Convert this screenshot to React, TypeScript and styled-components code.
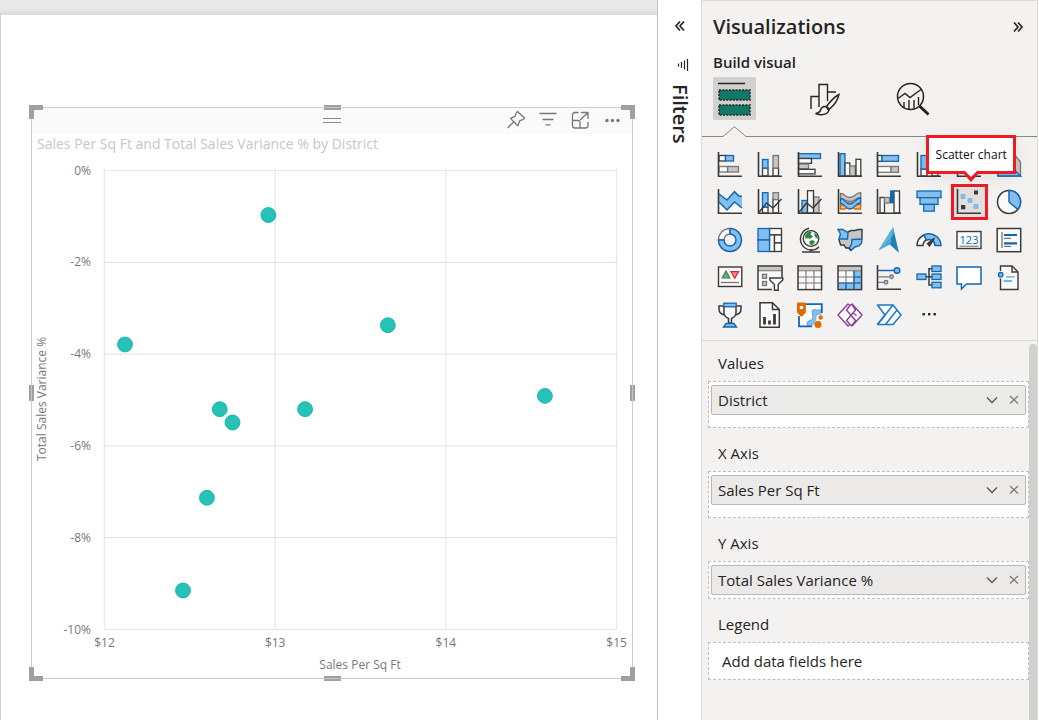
import React from 'react';
import styled, { createGlobalStyle } from 'styled-components';

const c = {
  dark: '#3b3a39',
  ink: '#252423',
  blue: '#83beec',
  blueLine: '#1267b4',
  gray: '#c8c6c4',
  grayLine: '#797775',
  paper: '#fafafa',
  purple: '#8c3a9e',
  orange: '#e06c00',
  red: '#ed1c24',
};

const GlobalStyle = createGlobalStyle`
  *, *::before, *::after { box-sizing: border-box; }
  body {
    margin: 0;
    background: #ffffff;
    color: ${c.ink};
    font-family: "Open Sans", "Noto Sans", sans-serif;
  }
  button { font: inherit; color: inherit; padding: 0; border: 0; background: none; cursor: pointer; }
  h1, h2, h3 { margin: 0; }
  svg { display: block; }
`;

/* ---------- page ---------- */

const Page = styled.div`
  display: flex;
  min-height: 100vh;
`;

const ReportArea = styled.main`
  flex: 1;
  min-width: 0;
  display: flex;
  flex-direction: column;
`;

const TopStrip = styled.div`
  height: 15px;
  background: linear-gradient(#e9e9e9 60%, #d9d9d9);
`;

const Canvas = styled.div`
  flex: 1;
  padding: 92px 24px 0 30px;
  border-left: 1px solid #d2d2d2;
`;

/* ---------- chart tile ---------- */

const Tile = styled.section`
  position: relative;
  border: 1px solid #cccccc;
`;

const TileBar = styled.div`
  height: 26px;
  background: #fafafa;
  display: grid;
  grid-template-columns: 1fr auto 1fr;
`;

const Grip = styled.button`
  grid-column: 2;
  width: 18px;
  height: 24px;
`;

const TileActions = styled.div`
  justify-self: end;
  display: flex;
  gap: 12px;
  padding: 2px 10px 0 0;
`;

const TileAction = styled.button`
  width: 20px;
  height: 20px;
`;

const TileTitle = styled.h2`
  padding-left: 5px;
  font-size: 14px;
  line-height: 20px;
  font-weight: 400;
  color: #c8c6c4;
  white-space: nowrap;
`;

const Plot = styled.svg`
  width: 100%;
  height: auto;
  font-size: 12px;
  fill: #777777;
`;

type CornerProps = { $v: 'top' | 'bottom'; $h: 'left' | 'right' };
const Corner = styled.span<CornerProps>`
  position: absolute;
  ${(p) => p.$v}: -3px;
  ${(p) => p.$h}: -3px;
  width: 14px;
  height: 14px;
  border: 0 solid #a0a0a0;
  border-${(p) => p.$v}-width: 5px;
  border-${(p) => p.$h}-width: 5px;
`;

const EdgeH = styled.span<{ $v: 'top' | 'bottom' }>`
  position: absolute;
  ${(p) => p.$v}: -3px;
  left: calc(50% - 8px);
  width: 17px;
  height: 5px;
  background: linear-gradient(#a0a0a0 40%, #c4c4c4 40%, #c4c4c4 60%, #a0a0a0 60%);
`;

const EdgeV = styled.span<{ $h: 'left' | 'right' }>`
  position: absolute;
  ${(p) => p.$h}: -3px;
  top: calc(50% - 8px);
  width: 5px;
  height: 16px;
  background: linear-gradient(90deg, #a0a0a0 40%, #c4c4c4 40%, #c4c4c4 60%, #a0a0a0 60%);
`;

const POINTS: [number, number][] = [
  [12.96, -0.97],
  [13.66, -3.37],
  [12.12, -3.79],
  [12.675, -5.2],
  [12.75, -5.49],
  [13.175, -5.2],
  [14.58, -4.91],
  [12.6, -7.13],
  [12.46, -9.15],
];
const px = (v: number) => 72.5 + (v - 12) * 170.7;
const py = (p: number) => 16.5 - p * 45.9;

function ScatterPlot() {
  return (
    <Plot viewBox="0 0 600 524" role="img" aria-label="Sales Per Sq Ft against Total Sales Variance %">
      {[12, 13, 14, 15].map((v) => (
        <g key={v}>
          <path d={`M${px(v)} 14.5V475.5`} stroke="#ebebeb" strokeWidth="1.4" />
          <text x={px(v)} y="493" textAnchor="middle">{`$${v}`}</text>
        </g>
      ))}
      {[0, -2, -4, -6, -8, -10].map((p) => (
        <g key={p}>
          <path d={`M72 ${py(p)}H585`} stroke="#e6e6e6" strokeWidth="1.2" />
          <text x="59" y={py(p) + 4} textAnchor="end">{`${p}%`}</text>
        </g>
      ))}
      {POINTS.map(([x, y]) => (
        <circle key={`${x}${y}`} cx={px(x)} cy={py(y)} r="7.4" fill="#28c1b7" stroke="#12b9ad" />
      ))}
      <text x="328" y="515" textAnchor="middle">Sales Per Sq Ft</text>
      <text transform="translate(14 245) rotate(-90)" textAnchor="middle">Total Sales Variance %</text>
    </Plot>
  );
}

function ChartTile() {
  const line = { fill: 'none', stroke: '#777', strokeWidth: 1.3, strokeLinejoin: 'round', strokeLinecap: 'round' } as const;
  return (
    <Tile>
      <TileBar>
        <Grip aria-label="Move visual">
          <svg width="18" height="24"><path d="M0 10.5H18M0 14.5H18" stroke="#8a8a8a" /></svg>
        </Grip>
        <TileActions>
          <TileAction aria-label="Pin visual">
            <svg width="20" height="20" {...line}>
              <path d="M11.5 1.5 18.5 8 16.8 9.7 13.8 10.7 11.8 15.7 4.5 8.4 9 6.4 10.2 3.2ZM7.8 12 2 17.5" />
            </svg>
          </TileAction>
          <TileAction aria-label="Filters on visual">
            <svg width="20" height="20" {...line}>
              <path d="M2 3.5H18M5 9.5H15M8 14.8H12" />
            </svg>
          </TileAction>
          <TileAction aria-label="Focus mode">
            <svg width="20" height="20" {...line}>
              <path d="M8 2.5H5Q2.5 2.5 2.5 5V15.5Q2.5 18 5 18H15.5Q18 18 18 15.5V12.5M2.5 10.5H8Q10 10.5 10 12.5V18M11.5 2.5H18V8.5M18 2.5 10.5 9.5" />
            </svg>
          </TileAction>
          <TileAction aria-label="More options">
            <svg width="20" height="20" fill="#777">
              <circle cx="5" cy="10.5" r="1.7" /><circle cx="10.5" cy="10.5" r="1.7" /><circle cx="16" cy="10.5" r="1.7" />
            </svg>
          </TileAction>
        </TileActions>
      </TileBar>
      <TileTitle>Sales Per Sq Ft and Total Sales Variance % by District</TileTitle>
      <ScatterPlot />
      <Corner $v="top" $h="left" />
      <Corner $v="top" $h="right" />
      <Corner $v="bottom" $h="left" />
      <Corner $v="bottom" $h="right" />
      <EdgeH $v="top" />
      <EdgeH $v="bottom" />
      <EdgeV $h="left" />
      <EdgeV $h="right" />
    </Tile>
  );
}

/* ---------- filters rail ---------- */

const FiltersRail = styled.aside`
  width: 44px;
  flex: none;
  border-left: 1px solid #c2c2c2;
  display: flex;
  flex-direction: column;
  align-items: center;
  padding-top: 18px;
  background: #ffffff;
`;

const RailButton = styled.button`
  width: 16px;
  height: 16px;
`;

const RailIcon = styled.svg`
  margin: 23px 0 0 8px;
`;

const RailTitle = styled.h2`
  margin-top: 11px;
  writing-mode: vertical-rl;
  font-size: 20px;
  line-height: 24px;
  font-weight: 600;
`;

/* ---------- visualizations pane ---------- */

const Pane = styled.aside`
  width: 337px;
  flex: none;
  display: flex;
  flex-direction: column;
  background: #f3f2f1;
  border: 1px solid #dedcda;
  border-bottom: 0;
  margin-right: 1px;
`;

const PaneHead = styled.header`
  display: flex;
  justify-content: space-between;
  align-items: center;
  height: 51px;
  padding: 0 11px;
`;

const PaneTitle = styled.h1`
  font-size: 20px;
  line-height: 28px;
  font-weight: 600;
`;

const BuildTitle = styled.h2`
  padding-left: 11px;
  font-size: 15px;
  line-height: 20px;
  font-weight: 600;
`;

const Modes = styled.nav`
  display: flex;
  gap: 46px;
  padding: 5px 0 6px 11px;
`;

const Mode = styled.button<{ $on?: boolean }>`
  width: 43px;
  height: 43px;
  border-radius: 2px;
  display: grid;
  place-items: center;
  background: ${(p) => (p.$on ? '#d2d0ce' : 'transparent')};
`;

const Divider = styled.div`
  display: flex;
  height: 11px;
  &::before { content: ''; width: 21px; border-bottom: 1px solid #8a8886; }
  &::after { content: ''; flex: 1; border-bottom: 1px solid #8a8886; }
`;

const Gallery = styled.div`
  height: 204px;
  padding: 9px 8px 6px 8px;
  display: grid;
  grid-template-columns: repeat(8, 1fr);
  grid-template-rows: repeat(5, 1fr);
  border-bottom: 1px solid #dcdad8;
`;

const VisualButton = styled.button<{ $on?: boolean }>`
  position: relative;
  place-self: center;
  width: 37px;
  height: 36px;
  display: grid;
  place-items: center;
  border: ${(p) => (p.$on ? `3px solid ${c.red}` : '0')};
  background: ${(p) => (p.$on ? '#e1dfdd' : 'transparent')};
`;

const Tip = styled.span`
  position: absolute;
  z-index: 1;
  left: calc(50% + 2px);
  bottom: 43px;
  width: 90px;
  transform: translateX(-50%);
  border: 3px solid ${c.red};
  background: #ffffff;
  color: #111111;
  font-size: 12px;
  line-height: 33px;
  text-align: center;
  white-space: nowrap;
  box-shadow: 0 4px 16px rgba(0, 0, 0, 0.07);
  svg {
    position: absolute;
    top: 100%;
    left: 50%;
    transform: translateX(-50%);
  }
`;

const Wells = styled.div`
  flex: 1;
  display: flex;
`;

const WellList = styled.div`
  flex: 1;
  display: flex;
  flex-direction: column;
  gap: 3px;
  padding-left: 6px;
`;

const WellLabel = styled.h3`
  padding: 5px 0 0 10px;
  font-size: 15px;
  line-height: 35px;
  font-weight: 400;
`;

const WellBox = styled.div<{ $roomy?: boolean }>`
  padding: 3px 2px;
  padding-bottom: ${(p) => (p.$roomy ? 12 : 3)}px;
  border: 1px dashed #c0bebc;
  background: #ffffff;
`;

const Chip = styled.div`
  height: 30px;
  display: flex;
  align-items: center;
  gap: 8px;
  padding: 0 4px 0 6px;
  border: 1px solid #bab8b6;
  border-radius: 2px;
  background: #ebeae9;
  font-size: 15px;
`;

const ChipName = styled.span`
  flex: 1;
`;

const ChipButton = styled.button`
  width: 14px;
  height: 14px;
`;

const EmptyWell = styled.button`
  width: 100%;
  height: 30px;
  padding-left: 11px;
  text-align: left;
  font-size: 15px;
`;

const ScrollThumb = styled.div`
  width: 8px;
  margin-top: 3px;
  border-radius: 4px 4px 0 0;
  background: #d2d0ce;
`;

/* ---------- visual gallery glyphs ---------- */

type BoxProps = { x: number; y: number; w: number; h: number; t?: 'blue' | 'gray' | 'white' | 'mute' };
function Box({ x, y, w, h, t = 'white' }: BoxProps) {
  const fill = t === 'blue' ? c.blue : t === 'gray' ? c.gray : c.paper;
  const stroke = t === 'blue' ? c.blueLine : t === 'white' ? c.dark : c.grayLine;
  return <rect x={x} y={y} width={w} height={h} fill={fill} stroke={stroke} strokeWidth="1.3" />;
}
const Axis = () => <path d="M1.5 0V24.3H25" fill="none" stroke={c.dark} strokeWidth="1.6" />;
const Trend = () => <path d="M1.5 24 9.5 14 16 19 24.5 10" fill="none" stroke={c.dark} strokeWidth="1.4" />;
const Sheet = () => (
  <>
    <rect x="1" y="1" width="24" height="24" fill={c.paper} />
    <rect x="1" y="1" width="24" height="4.5" fill={c.gray} />
  </>
);
const SheetLines = () => (
  <>
    <path d="M1 5.7H25M1 12H25M1 18H25M9 5.7V25M17 5.7V25" stroke={c.grayLine} strokeWidth="1.1" />
    <rect x="1" y="1" width="23.6" height="23.6" fill="none" stroke={c.dark} strokeWidth="1.5" />
  </>
);

const VISUALS: { name: string; art: React.ReactNode }[] = [
  { name: 'Stacked bar chart', art: <><Box x={2} y={3.5} w={6.5} h={5.5} /><Box x={8.5} y={3.5} w={8} h={5.5} t="blue" /><Box x={10.5} y={14.5} w={11} h={5.5} t="gray" /><Box x={2} y={14.5} w={8.5} h={5.5} t="mute" /><Axis /></> },
  { name: 'Stacked column chart', art: <><Box x={5.5} y={16} w={5.5} h={8} /><Box x={5.5} y={7.5} w={5.5} h={8.5} t="blue" /><Box x={16} y={16} w={5.5} h={8} /><Box x={16} y={3.5} w={5.5} h={12.5} t="gray" /><Axis /></> },
  { name: 'Clustered bar chart', art: <><Box x={1.5} y={1.7} w={22} h={4.8} t="blue" /><Box x={1.5} y={6.5} w={13} h={4.8} /><Box x={1.5} y={12} w={10} h={4.8} t="gray" /><Box x={1.5} y={17.3} w={16.5} h={4.6} /><Axis /></> },
  { name: 'Clustered column chart', art: <><Box x={3} y={1.7} w={5} h={22.3} t="blue" /><Box x={8} y={11} w={4.8} h={13} /><Box x={12.8} y={14} w={5.5} h={10} t="gray" /><Box x={19} y={7.3} w={4.8} h={16.7} /><Axis /></> },
  { name: '100% stacked bar chart', art: <><Box x={1.5} y={3.5} w={4.5} h={5.8} /><Box x={6} y={3.5} w={16.5} h={5.8} t="blue" /><Box x={1.5} y={14.5} w={13.5} h={5.8} t="mute" /><Box x={15} y={14.5} w={7.5} h={5.8} t="gray" /><Axis /></> },
  { name: '100% stacked column chart', art: <><Box x={5} y={17} w={6} h={7} /><Box x={5} y={3.5} w={6} h={13.5} t="blue" /><Box x={16} y={14} w={6} h={10} /><Box x={16} y={3.5} w={6} h={10.5} t="gray" /><Axis /></> },
  { name: 'Line chart', art: <><path d="M2 18 9 10 15 15 24 5" fill="none" stroke={c.blueLine} strokeWidth="1.5" /><Axis /></> },
  { name: 'Area chart', art: <><path d="M2 12 12 2H18L24.5 10V24H2Z" fill={c.gray} stroke={c.grayLine} strokeWidth="1.3" /><path d="M2 16 9 9 24.5 24H2Z" fill={c.blue} stroke={c.blueLine} strokeWidth="1.4" /></> },

  { name: 'Stacked area chart', art: <><path d="M2 13 10 21 17.5 13 25 19V24H2Z" fill={c.paper} /><path d="M2 5 10 11 17.5 2.7 22 7.3H25V19L17.5 13 10 21 2 13Z" fill={c.blue} /><path d="M2 5 10 11 17.5 2.7 22 7.3H25M25 19 17.5 13 10 21 2 13" fill="none" stroke={c.blueLine} strokeWidth="1.5" /><Axis /></> },
  { name: 'Line and stacked column chart', art: <><Box x={5.5} y={18} w={5.5} h={6} /><Box x={5.5} y={3.7} w={5.5} h={14.3} t="blue" /><Box x={16} y={10.5} w={5.5} h={13.5} /><Box x={16} y={3.7} w={5.5} h={6.8} t="gray" /><Axis /><Trend /></> },
  { name: 'Line and clustered column chart', art: <><Box x={5} y={11.5} w={5.5} h={12.5} t="blue" /><Box x={16.5} y={8} w={5.5} h={16} t="gray" /><Box x={10.5} y={1.7} w={6} h={22.3} /><Axis /><Trend /></> },
  { name: 'Ribbon chart', art: <>
    <path d="M3.5 16H8L13 12 18 15.5H23.7V20H18L13 17 8 20H3.5Z" fill="#ffb46b" stroke={c.orange} strokeWidth="1.3" />
    <path d="M3.5 4.5C8 4.5 8 8.5 13 8.5S18 3.7 23.7 3.7V8.7C18 8.7 18 12.5 13 12.5S8 9.5 3.5 9.5Z" fill={c.gray} stroke={c.grayLine} strokeWidth="1.3" />
    <path d="M3.5 9.5C8 9.5 8 15 13 15S18 9 23.7 9V14C18 14 18 20 13 20S8 14.5 3.5 14.5Z" fill={c.blue} stroke={c.blueLine} strokeWidth="1.3" /><Axis /></> },
  { name: 'Waterfall chart', art: <><Box x={4} y={8.5} w={4.5} h={15.5} /><Box x={8.5} y={8.5} w={5} h={5.5} t="gray" /><Box x={18} y={2} w={5.5} h={22} /><rect x="14" y="1.3" width="4" height="13" fill={c.blueLine} /><Axis /></> },
  { name: 'Funnel chart', art: <><Box x={1} y={2} w={24} h={6.7} t="blue" /><Box x={4} y={8.7} w={18} h={6.7} t="blue" /><Box x={7.7} y={15.4} w={10.6} h={6.7} t="blue" /></> },
  { name: 'Scatter chart', art: <><g fill={c.dark}><rect x="18" y="1.5" width="4" height="4" /><rect x="5" y="16" width="4.3" height="4.3" /></g><g fill={c.blue} stroke="#70a7d3" strokeWidth=".6"><rect x="5" y="5.5" width="4" height="4" /><rect x="12" y="9.5" width="4" height="4" /><rect x="18" y="15.5" width="4" height="4" /></g><Axis /></> },
  { name: 'Pie chart', art: <><circle cx="13" cy="13" r="11.5" fill={c.paper} stroke={c.dark} strokeWidth="1.5" /><path d="M13 1.5A11.5 11.5 0 0 1 21.8 20.4L13 13Z" fill={c.blue} stroke={c.blueLine} strokeWidth="1.5" /></> },

  { name: 'Donut chart', art: <><path d="M13 1.5A11.5 11.5 0 0 0 1.5 13H7A6 6 0 0 1 13 7Z" fill={c.paper} stroke={c.grayLine} strokeWidth="1.4" /><path d="M13 1.5A11.5 11.5 0 1 1 1.5 13H7A6 6 0 1 0 13 7Z" fill={c.blue} stroke={c.blueLine} strokeWidth="1.5" /></> },
  { name: 'Treemap', art: <><Box x={12.5} y={1.5} w={12} h={6.5} /><Box x={12.5} y={8} w={5} h={16.5} /><Box x={17.5} y={8} w={7} h={8} /><Box x={17.5} y={16} w={7} h={8.5} /><Box x={1} y={1.5} w={11.5} h={11.5} t="blue" /><Box x={1} y={13} w={11.5} h={11.5} t="blue" /></> },
  { name: 'Map', art: <><circle cx="14" cy="11.5" r="7.8" fill={c.paper} stroke={c.dark} strokeWidth="1.3" /><path d="M8 8.5 11 5 15 4.5 13.5 7.5 16 9.5 13 12 11 11 8.5 12ZM17 5.5 20.5 8 21 12 18 10ZM12.5 14 16 13 18 15 15 18.5 12.5 17Z" fill="#2a8a43" /><path d="M12 1.3A11 11 0 1 0 22 20M14 22V25M5 25H23" fill="none" stroke={c.dark} strokeWidth="1.4" /></> },
  { name: 'Filled map', art: <>
    <path d="M11 5.500 14 3.500H18L21 2.500H25V12H15V16L11 21.500H8.500V18H3.500L2 12H10.500Z" fill={c.gray} />
    <path d="M1 2.500H6L8 4 11 5.500 10.500 12H2L3.500 7ZM15 12.500 25 12 24.500 16 22 19 18 20 14 23.500 12 21.500 14.500 17Z" fill={c.blue} stroke={c.blueLine} strokeWidth="1.4" />
    <path d="M11 5 14 3.500H18L21 2.500H25V11.500M2 12.500 3.500 18H7L9 21H12L14 23.500" fill="none" stroke={c.dark} strokeWidth="1.4" /></> },
  { name: 'Azure map', art: <><path d="M17 0 2.3 23.5 14 17.5Z" fill="#47a8d4" /><path d="M17 0 23 26 14 17.5Z" fill="#1f7fb8" /><path d="M17 0 18 7 10 16 2.3 23.5Z" fill="#6cc3e4" opacity=".5" /></> },
  { name: 'Gauge', art: <><path d="M1 18.5A12 12 0 0 1 8 8L10.5 13A6 6 0 0 0 7 18.5Z" fill={c.paper} stroke={c.dark} strokeWidth="1.4" /><path d="M8 8A12 12 0 0 1 25 18.5H19A6 6 0 0 0 10.5 13Z" fill={c.blue} stroke={c.blueLine} strokeWidth="1.5" /><path d="M18.5 11 11.5 16.5 13.5 19Z" fill={c.dark} stroke={c.dark} strokeWidth="1.4" /></> },
  { name: 'Card', art: <><rect x="1" y="4.5" width="24" height="17" fill={c.paper} stroke={c.dark} strokeWidth="1.4" /><text x="13" y="17" textAnchor="middle" fontSize="11" fill={c.blueLine}>123</text><path d="M3.5 19.2H22.5" stroke={c.grayLine} strokeWidth="1.1" /></> },
  { name: 'Multi-row card', art: <><rect x="1.2" y="1.5" width="23.5" height="23.2" fill={c.paper} stroke={c.dark} strokeWidth="1.5" /><path d="M6 5V21M8 11.3H15M8 19.3H15" stroke={c.grayLine} strokeWidth="1.3" /><path d="M8 8H21M8 16.3H21" stroke={c.blueLine} strokeWidth="2.2" /></> },

  { name: 'KPI', art: <><rect x="1.5" y="2" width="23.3" height="19.5" fill={c.paper} stroke={c.dark} strokeWidth="1.4" /><path d="M5.2 13 9 6 12.8 13Z" fill="#6cb17c" stroke="#2a8a43" strokeWidth="1.2" /><path d="M14 6.7H21.5L17.7 13.3Z" fill="#f08a8a" stroke="#d7262b" strokeWidth="1.2" /><path d="M4 17.5H22" stroke={c.grayLine} strokeWidth="1.3" /></> },
  { name: 'Slicer', art: <><Sheet /><path d="M1 5.7H25" stroke={c.grayLine} strokeWidth="1.1" /><path d="M25 12V1H1V24.6H15" fill="none" stroke={c.dark} strokeWidth="1.5" /><Box x={5.5} y={9.3} w={4} h={4} t="gray" /><Box x={5.5} y={16.5} w={4} h={4} t="gray" /><path d="M12.8 13H25.8V15L21.2 19.5V25.3H17.4V19.5L12.8 15Z" fill={c.paper} stroke={c.dark} strokeWidth="1.4" /></> },
  { name: 'Table', art: <><Sheet /><SheetLines /></> },
  { name: 'Matrix', art: <><Sheet /><path d="M17 5.7H25V25H1V18H17Z" fill={c.blue} /><SheetLines /><path d="M17 5.7V25M1 18H25M17 12H25M9 18V25" stroke={c.blueLine} strokeWidth="1.2" /></> },
  { name: 'Dot plot', art: <><Axis /><path d="M2 5.5H18" stroke={c.blueLine} strokeWidth="1.5" /><circle cx="21" cy="5.5" r="2.8" fill={c.blue} stroke={c.blueLine} strokeWidth="1.4" /><g fill={c.gray} stroke={c.grayLine} strokeWidth="1.3"><path d="M2 11.8H13.5M2 17.3H8" /><circle cx="15.5" cy="11.8" r="1.8" /><circle cx="10" cy="17.3" r="1.8" /></g></> },
  { name: 'Decomposition tree', art: <><path d="M10 11.7H16M16 3.7H13V20H16" fill="none" stroke={c.dark} strokeWidth="1.5" /><Box x={1} y={9} w={9} h={5.5} t="blue" /><Box x={16} y={1} w={9} h={5.5} t="blue" /><Box x={16} y={9} w={9} h={5.5} t="blue" /><Box x={16} y={17.3} w={9} h={5.5} t="blue" /></> },
  { name: 'Q&A', art: <path d="M1 2H25V19H10.5L5.5 24V19H1Z" fill="#fff" stroke={c.blueLine} strokeWidth="1.5" /> },
  { name: 'Smart narrative', art: <><path d="M4.5 6V1H16L22 7V24.5H4.5V13.5" fill={c.paper} stroke={c.dark} strokeWidth="1.4" /><path d="M16 1V7H22" fill="none" stroke={c.dark} strokeWidth="1.4" /><circle cx="4.7" cy="9.7" r="2.2" fill={c.blue} stroke={c.blueLine} strokeWidth="1.4" /><path d="M10 11.8H18.5M7.5 16H16" stroke="#4aa0de" strokeWidth="1.3" /></> },

  { name: 'Goals', art: <><path d="M7 4H2V7Q2 12 8 13M19 4H24V7Q24 12 18 13" fill="none" stroke={c.dark} strokeWidth="1.5" /><path d="M7 4V11Q7.500 15 11.500 16.500V21H14.500V16.500Q18.500 15 19 11V4Z" fill={c.paper} stroke={c.dark} strokeWidth="1.5" /><Box x={6.8} y={1.2} w={12.4} h={3.6} t="blue" /><path d="M9 21.500H17L19.500 25H6.500Z" fill={c.blue} stroke={c.blueLine} strokeWidth="1.4" /></> },
  { name: 'Paginated report', art: <><path d="M3 .8H15.500L22.300 7.500V25.300H3Z" fill={c.paper} stroke={c.dark} strokeWidth="1.5" /><path d="M15.500 .8V7.500H22.300" fill="none" stroke={c.dark} strokeWidth="1.5" /><path d="M7.500 15V22.500M12.500 18.500V22.500M17.500 12V22.500" stroke={c.dark} strokeWidth="2.8" /></> },
  { name: 'ArcGIS Maps', art: <><path d="M9 2.500H24.500V13L15 24H2V12Z" fill={c.paper} /><path d="M10.500 24Q9 19 13 18.500T15.500 12 19.500 8H24.500V13Q19.500 12 19.500 16T15.500 24Z" fill={c.blue} /><path d="M10.500 24Q9 19 13 18.500T15.500 12 19.500 8H24" fill="none" stroke="#5aa3dc" /><path d="M9 2.200H24.800V11M2 14V24.300H15" fill="none" stroke={c.blueLine} strokeWidth="1.8" /><path d="M.5 1H8.300V10.500L4.400 14.500.5 10.500Z" fill={c.orange} stroke={c.orange} strokeLinejoin="round" /><circle cx="4.400" cy="5.500" r="1.800" fill="#fff" /><circle cx="23.700" cy="15.500" r="2.200" fill={c.orange} /><circle cx="21" cy="22.500" r="3.500" fill={c.orange} /></> },
  { name: 'Power Apps', art: <g fill="#fff" stroke={c.purple} strokeWidth="1.400" strokeLinejoin="round"><path d="M13 3.500 11 2 1 13 11 24 13 22.500 15 24 25 13 15 2Z" /><path d="M13 3.500 9.500 8 18.500 18.500 15 23.500M13 22.500 9.500 18.500 18.500 8 15 2.500M16 11 19.500 13.500" fill="none" /></g> },
  { name: 'Power Automate', art: <g fill="#fff" stroke="#1779d1" strokeWidth="1.500" strokeLinejoin="round"><path d="M1.500 3H17L25 13 17 22.500H1.500L9 13Z" /><path d="M1.500 22.500 17 3M9.500 22.500 21 8" /></g> },
  { name: 'More visuals', art: <g fill={c.ink}><rect x="6.500" y="11" width="2.400" height="2.400" /><rect x="12" y="11" width="2.400" height="2.400" /><rect x="17.500" y="11" width="2.400" height="2.400" /></g> },
];

function VisualGallery() {
  return (
    <Gallery>
      {VISUALS.map(({ name, art }) => {
        const on = name === 'Scatter chart';
        return (
          <VisualButton key={name} aria-label={name} $on={on}>
            <svg width="26" height="26" overflow="visible">{art}</svg>
            {on && (
              <Tip role="tooltip">
                Scatter chart
                <svg width="20" height="12">
                  <path d="M0 0H20L10 11Z" fill={c.red} />
                  <path d="M4 0H16L10 6Z" fill="#fff" />
                </svg>
              </Tip>
            )}
          </VisualButton>
        );
      })}
    </Gallery>
  );
}

/* ---------- field wells ---------- */

const WELLS = [
  { label: 'Values', field: 'District', roomy: true },
  { label: 'X Axis', field: 'Sales Per Sq Ft', roomy: true },
  { label: 'Y Axis', field: 'Total Sales Variance %', roomy: false },
  { label: 'Legend', field: null, roomy: false },
];

function FieldWells() {
  return (
    <Wells>
      <WellList>
        {WELLS.map(({ label, field, roomy }) => (
          <section key={label} aria-label={label}>
            <WellLabel>{label}</WellLabel>
            <WellBox $roomy={roomy}>
              {field ? (
                <Chip>
                  <ChipName>{field}</ChipName>
                  <ChipButton aria-label={`${field} options`}>
                    <svg width="14" height="14"><path d="M2 4.500 7 9.500 12 4.500" fill="none" stroke="#555" strokeWidth="1.300" /></svg>
                  </ChipButton>
                  <ChipButton aria-label={`Remove ${field}`}>
                    <svg width="14" height="14"><path d="M3 3 11 10.500M11 3 3 10.500" stroke="#777" strokeWidth="1.200" /></svg>
                  </ChipButton>
                </Chip>
              ) : (
                <EmptyWell>Add data fields here</EmptyWell>
              )}
            </WellBox>
          </section>
        ))}
      </WellList>
      <ScrollThumb />
    </Wells>
  );
}

export default function App() {
  const pen = { fill: 'none', stroke: c.ink, strokeWidth: 1.5 } as const;
  return (
    <Page>
      <GlobalStyle />
      <ReportArea>
        <TopStrip />
        <Canvas>
          <ChartTile />
        </Canvas>
      </ReportArea>

      <FiltersRail>
        <RailButton aria-label="Expand filters">
          <svg width="16" height="16" {...pen}><path d="M8 3.500 4 8 8 12.500M12 3.500 8 8 12 12.500" strokeWidth="1.700" /></svg>
        </RailButton>
        <RailIcon width="14" height="16" {...pen}><path d="M1.500 6.500V9.500M4.500 5V11M7.500 3.500V12.500M10.500 2V14" strokeWidth="1.200" /></RailIcon>
        <RailTitle>Filters</RailTitle>
      </FiltersRail>

      <Pane>
        <PaneHead>
          <PaneTitle>Visualizations</PaneTitle>
          <RailButton aria-label="Collapse pane">
            <svg width="16" height="16" {...pen}><path d="M4 3.500 8 8 4 12.500M8 3.500 12 8 8 12.500" strokeWidth="1.700" /></svg>
          </RailButton>
        </PaneHead>
        <BuildTitle>Build visual</BuildTitle>
        <Modes>
          <Mode $on aria-label="Build visual">
            <svg width="33" height="34">
              <path d="M0 1.500H27" stroke={c.ink} strokeWidth="1.500" />
              <g fill="#117865" stroke={c.ink} strokeWidth="1.500" strokeDasharray="2 1.300">
                <rect x="1" y="8" width="31" height="10" />
                <rect x="1" y="23" width="31" height="10" />
              </g>
            </svg>
          </Mode>
          <Mode aria-label="Format visual">
            <svg width="32" height="34" {...pen} overflow="visible" strokeWidth="1.400">
              <path d="M3 27V14.500H11V25M11 14.500V2.500H19.500V19M19.500 10H28" />
              <path d="M31 12.500Q25.500 15 18.500 24.500L21.500 27Q29 21 31 12.500ZM18 24.500Q13.500 24 12.500 28.500 10.500 31.500 7.500 31.500 17.500 35 21 28.500Z" />
            </svg>
          </Mode>
          <Mode aria-label="Analytics">
            <svg width="34" height="34" {...pen}>
              <circle cx="14.500" cy="14.500" r="13" />
              <path d="M2 16.500 9 11.500 14 15.500 25 7.500M8 20V26M13 18V27M18 18V27M22.500 15V23" strokeWidth="1.400" />
              <path d="M23.500 24 32.500 32.500" strokeWidth="3" />
            </svg>
          </Mode>
        </Modes>
        <Divider>
          <svg width="23" height="11"><path d="M0 10.500 11.500 .7 23 10.500" fill="none" stroke="#8a8886" /></svg>
        </Divider>
        <VisualGallery />
        <FieldWells />
      </Pane>
    </Page>
  );
}
